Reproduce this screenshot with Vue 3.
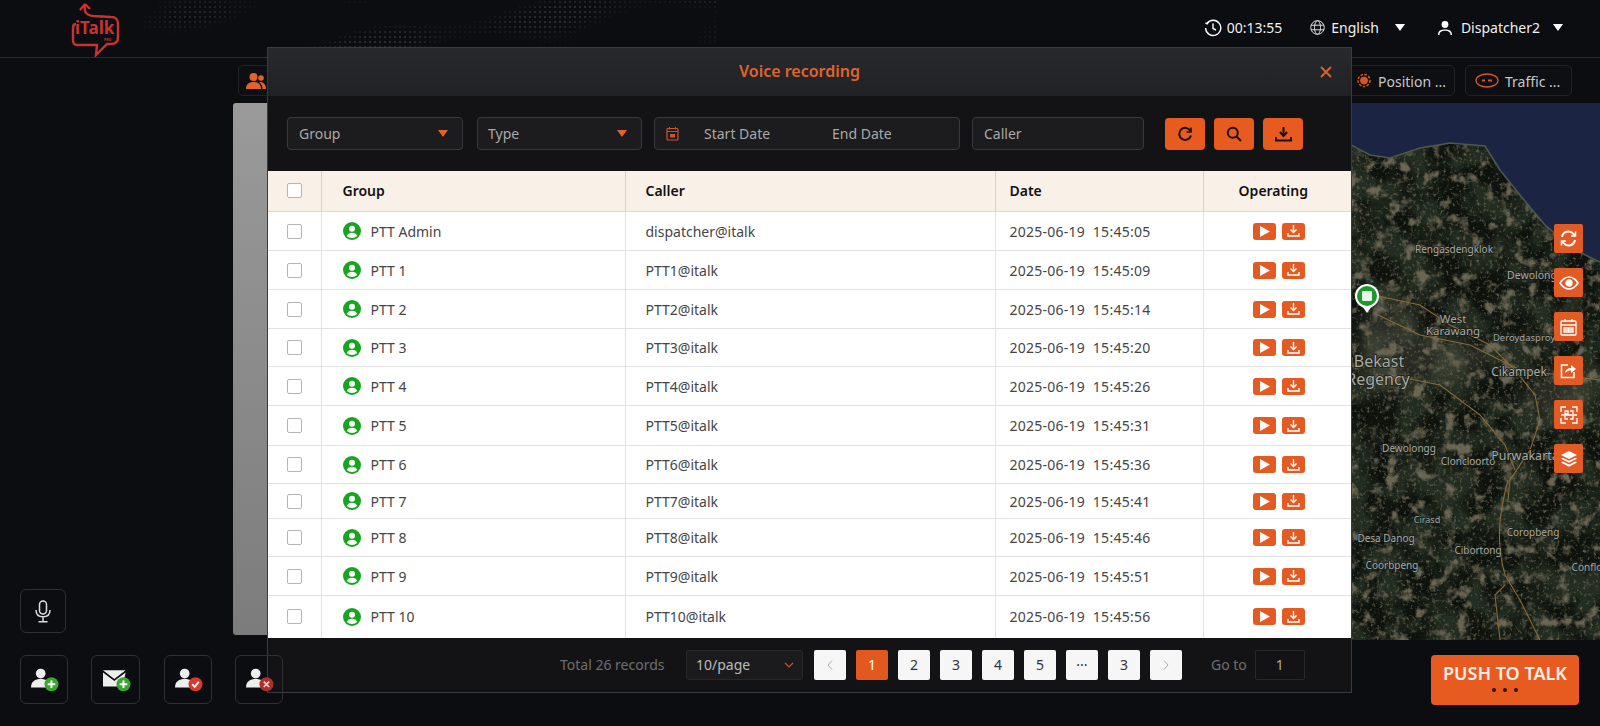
<script setup>
const rows = [
  { group: 'PTT Admin', caller: 'dispatcher@italk', time: '15:45:05', h: 39 },
  { group: 'PTT 1', caller: 'PTT1@italk', time: '15:45:09', h: 39 },
  { group: 'PTT 2', caller: 'PTT2@italk', time: '15:45:14', h: 39 },
  { group: 'PTT 3', caller: 'PTT3@italk', time: '15:45:20', h: 38 },
  { group: 'PTT 4', caller: 'PTT4@italk', time: '15:45:26', h: 39 },
  { group: 'PTT 5', caller: 'PTT5@italk', time: '15:45:31', h: 40 },
  { group: 'PTT 6', caller: 'PTT6@italk', time: '15:45:36', h: 38 },
  { group: 'PTT 7', caller: 'PTT7@italk', time: '15:45:41', h: 35 },
  { group: 'PTT 8', caller: 'PTT8@italk', time: '15:45:46', h: 38 },
  { group: 'PTT 9', caller: 'PTT9@italk', time: '15:45:51', h: 39 },
  { group: 'PTT 10', caller: 'PTT10@italk', time: '15:45:56', h: 42 },
]

const pages = ['1', '2', '3', '4', '5', '···', '3']

const mapLabels = [
  { t: 'Rengasdengklok', x: 1454, y: 253, s: 10 },
  { t: 'Dewolong', x: 1532, y: 279, s: 10.5 },
  { t: 'West', x: 1453, y: 323, s: 11.5 },
  { t: 'Karawang', x: 1453, y: 335, s: 11.5 },
  { t: 'Deroydasproy', x: 1524, y: 341, s: 9.5 },
  { t: 'Bekast', x: 1379, y: 367, s: 16 },
  { t: 'Regency', x: 1378, y: 385, s: 16 },
  { t: 'Cikampek', x: 1519, y: 376, s: 12 },
  { t: 'Dewolongg', x: 1409, y: 452, s: 10 },
  { t: 'Cloncloorto', x: 1468, y: 465, s: 10 },
  { t: 'Purwakarta', x: 1525, y: 460, s: 12.5 },
  { t: 'Cirasd', x: 1427, y: 523, s: 9 },
  { t: 'Desa Danog', x: 1386, y: 542, s: 10 },
  { t: 'Cibortong', x: 1478, y: 554, s: 10 },
  { t: 'Coorbpeng', x: 1392, y: 569, s: 10 },
  { t: 'Coropbeng', x: 1533, y: 536, s: 10 },
  { t: 'Conflon', x: 1590, y: 571, s: 10 },
]

// dotted world-map texture behind the top bar
const dots = []
for (let x = 130; x < 720; x += 5) {
  for (let y = 2; y < 56; y += 5) {
    const v = Math.sin(x * 0.035 + 1) + Math.cos(y * 0.12 + x * 0.02) + Math.sin(x * 0.011 + y * 0.07)
    if (v > 0.3) dots.push({ x, y, o: Math.min(0.34, (v - 0.1) * 0.18) })
  }
}
</script>

<template>
  <div class="app">
    <header class="topbar">
      <svg class="dots" width="720" height="57">
        <circle v-for="(d, i) in dots" :key="i" :cx="d.x" :cy="d.y" r="0.9" fill="#8b8d92" :opacity="d.o" />
      </svg>
      <svg class="logo" width="52" height="56" viewBox="0 0 52 56">
        <path d="M14 3 L9 9 M14 3 L19 8 M14 3 C13 10 14 14 22 15 L40 16 C45 16 47 18 47 24 L47 36 C47 41 45 43 40 43 L36 43 L25 54 L26 44 L6 44 C3 44 2 42 2 39 L2 27 C2 24 3 23 5 23" fill="none" stroke="#c9332f" stroke-width="2.4" />
        <text x="4" y="33" class="logo-text">iTalk</text>
        <text x="33" y="40" class="logo-pro">PRO</text>
      </svg>
      <div class="status">
        <span class="status-item">
          <svg width="18" height="18" viewBox="0 0 18 18" fill="none" stroke="#fff" stroke-width="1.4"><path d="M3 4.5A7.6 7.6 0 1 1 1.6 9" /><path d="M9 4.5V9.5L12 11" /><path d="M1.5 4L3.2 4.8 4 3" /></svg>
          00:13:55
        </span>
        <span class="status-item lang">
          <svg width="15" height="15" viewBox="0 0 15 15" fill="none" stroke="#ddd" stroke-width="1"><circle cx="7.5" cy="7.5" r="6.8" /><ellipse cx="7.5" cy="7.5" rx="3" ry="6.8" /><path d="M1 5.2H14M1 9.8H14" /></svg>
          English
          <i class="caret"></i>
        </span>
        <span class="status-item user">
          <svg width="16" height="16" viewBox="0 0 16 16" fill="#fff"><circle cx="8" cy="4.5" r="3.4" /><path d="M1 15C1 10.5 4 9.4 8 9.4S15 10.5 15 15H13.6C13.4 11.8 11 10.8 8 10.8S2.600 11.800 2.400 15Z" /></svg>
          Dispatcher2
          <i class="caret"></i>
        </span>
      </div>
    </header>

    <div class="upper">
      <aside class="left">
        <button class="tool mic">
          <svg width="16" height="23" viewBox="0 0 16 23" fill="none" stroke="#ddd" stroke-width="1.500"><rect x="4.500" y="1" width="7" height="13" rx="3.500" /><path d="M1 10C1 14.500 4 16.800 8 16.800S15 14.500 15 10M8 17V21.500M3.500 21.800H12.500" /></svg>
        </button>
      </aside>

      <main class="stage">
        <div class="tabs">
          <div class="tab first">
            <svg width="20" height="16" viewBox="0 0 20 16" fill="#e0642a"><circle cx="7.500" cy="4" r="4" /><path d="M0 16C0 11 3 9 7.500 9S15 11 15 16Z" /><circle cx="15" cy="5" r="2.800" /><path d="M13 9C17 8.500 20 11 20 16H16.500C16.500 13 15 10.500 13 9Z" /></svg>
          </div>
          <div class="tab position">
            <svg width="14" height="15" viewBox="0 0 14 15" fill="none" stroke="#d9581f"><circle cx="7" cy="7.500" r="3.500" fill="#d9581f" /><circle cx="7" cy="7.500" r="6" stroke-dasharray="2.500 1.500" stroke-width="1.500" /></svg>
            <span>Position ...</span>
          </div>
          <div class="tab traffic">
            <svg width="24" height="15" viewBox="0 0 24 15" fill="none" stroke="#d9581f" stroke-width="1.300"><ellipse cx="12" cy="7.500" rx="11" ry="6.500" /><path d="M7 7.500H10M13 7.500H17" stroke-width="1.800" /></svg>
            <span>Traffic ...</span>
          </div>
        </div>

        <div class="panels">
          <div class="grey"></div>
          <div class="map">
            <svg width="249" height="537" viewBox="1351 103 249 537">
              <defs>
                <filter id="terrain" x="0" y="0" width="100%" height="100%" color-interpolation-filters="sRGB">
                  <feTurbulence type="fractalNoise" baseFrequency="0.03" numOctaves="5" seed="4" />
                  <feColorMatrix type="matrix" values="0 0 0 0 0.05  0 0 0 0 0.07  0 0 0 0 0.05  0 0 0 4 -1.500" />
                </filter>
                <filter id="patches" x="0" y="0" width="100%" height="100%" color-interpolation-filters="sRGB">
                  <feTurbulence type="fractalNoise" baseFrequency="0.07" numOctaves="5" seed="21" />
                  <feColorMatrix type="matrix" values="0 0 0 0 0.42  0 0 0 0 0.40  0 0 0 0 0.33  0 0 0 5 -2.800" />
                </filter>
                <filter id="speckle" x="0" y="0" width="100%" height="100%" color-interpolation-filters="sRGB">
                  <feTurbulence type="fractalNoise" baseFrequency="0.3" numOctaves="3" seed="9" />
                  <feColorMatrix type="matrix" values="0 0 0 0 0.40  0 0 0 0 0.38  0 0 0 0 0.30  0 0 0 3 -1.650" />
                </filter>
                <filter id="haze" x="-30%" y="-30%" width="160%" height="160%">
                  <feGaussianBlur stdDeviation="9" />
                </filter>
                <clipPath id="land">
                  <path d="M1351 145 L1370 155 L1390 158 L1420 148 L1450 143 L1485 146 L1500 170 L1520 195 L1545 225 L1575 250 L1600 262 V640 H1351Z" />
                </clipPath>
              </defs>
              <rect x="1351" y="103" width="249" height="537" fill="#1c2444" />
              <g clip-path="url(#land)">
                <rect x="1351" y="103" width="249" height="537" fill="#222c20" />
                <rect x="1351" y="103" width="249" height="537" filter="url(#terrain)" />
                <g fill="#6e6a5c" opacity="0.3" filter="url(#haze)">
                  <ellipse cx="1390" cy="345" rx="30" ry="50" />
                  <ellipse cx="1450" cy="360" rx="40" ry="20" />
                  <ellipse cx="1560" cy="395" rx="32" ry="28" />
                </g>
                <rect x="1351" y="103" width="249" height="537" filter="url(#patches)" />
                <rect x="1351" y="103" width="249" height="537" filter="url(#speckle)" />
              </g>
              <path d="M1351 145 L1370 155 L1390 158 L1420 148 L1450 143 L1485 146 L1500 170 L1520 195 L1545 225 L1575 250 L1600 262" fill="none" stroke="#4b5a4a" stroke-width="1.500" />
              <g fill="none" stroke="#8a6a3a" stroke-width="1.100">
                <path d="M1378 296 L1420 305 L1450 325 L1490 345 L1515 370 L1535 395 L1540 420 L1530 450 L1510 480 L1508 500" />
                <path d="M1378 315 L1420 335 L1470 345 L1520 370 L1600 380" />
                <path d="M1390 375 L1440 385 L1480 415 L1505 445 L1515 470" />
                <path d="M1508 480 C1500 510 1495 540 1505 575 L1520 600 L1540 640" />
                <path d="M1505 585 L1495 595 L1500 640" />
              </g>
              <text v-for="l in mapLabels" :key="l.t" :x="l.x" :y="l.y" :font-size="l.s" text-anchor="middle" class="map-label">{{ l.t }}</text>
              <circle cx="1367" cy="296" r="12" fill="#fff" />
              <path d="M1362 306 L1367 313 L1372 306Z" fill="#fff" />
              <circle cx="1367" cy="296" r="10" fill="#1a9a2a" />
              <rect x="1362" y="291" width="10" height="10" rx="1" fill="#e8f5e8" />
            </svg>
            <div class="map-tools">
              <button class="map-tool">
                <svg width="17" height="17" viewBox="0 0 17 17" fill="none" stroke="#fff" stroke-width="2"><path d="M2 7A6.500 6.500 0 0 1 13.500 4L15 5.500M15 10A6.500 6.500 0 0 1 3.500 13L2 11.500" /><path d="M15.500 1.500V6H11M1.500 15.500V11H6" stroke-width="1.500" /></svg>
              </button>
              <button class="map-tool">
                <svg width="20" height="14" viewBox="0 0 20 14" fill="none" stroke="#fff" stroke-width="1.700"><path d="M1 7C4 2.500 7 1 10 1S16 2.500 19 7C16 11.500 13 13 10 13S4 11.500 1 7Z" /><circle cx="10" cy="7" r="2.800" fill="#fff" /></svg>
              </button>
              <button class="map-tool">
                <svg width="17" height="18" viewBox="0 0 17 18" fill="none" stroke="#fff" stroke-width="1.300"><rect x="1" y="3" width="15" height="14" rx="1" /><path d="M1 7H16M5 1V4M12 1V4M4 10H13V14H4ZM8.500 10V14M4 12H13" /></svg>
              </button>
              <button class="map-tool">
                <svg width="17" height="17" viewBox="0 0 17 17" fill="none" stroke="#fff" stroke-width="1.500"><path d="M8 3H1.500V15.500H14V10" /><path d="M5 11C5.500 7.500 8 6 11 6V3L16 7 11 11V8.500C9 8.500 7 9 5 11Z" fill="#fff" stroke="none" /></svg>
              </button>
              <button class="map-tool">
                <svg width="18" height="18" viewBox="0 0 18 18" fill="none" stroke="#fff" stroke-width="1.300"><path d="M1 6V1H6M12 1H17V6M17 12V17H12M6 17H1V12" /><path d="M5 5H8V8H5ZM10 5H13V8M5 10V13H8M13 10V13H10M1 9H17" /></svg>
              </button>
              <button class="map-tool">
                <svg width="18" height="18" viewBox="0 0 18 18" fill="#fff"><path d="M9 1L17 5 9 9 1 5Z" /><path d="M2.800 7.700L9 10.800 15.200 7.700 17 8.800 9 12.800 1 8.800Z" /><path d="M2.800 11.500L9 14.600 15.200 11.500 17 12.600 9 16.800 1 12.600Z" /></svg>
              </button>
            </div>
          </div>
        </div>
      </main>
    </div>

    <footer class="bottom">
      <div class="actions">
        <button class="tool wide">
          <svg width="28" height="24" viewBox="0 0 26 22"><circle cx="9" cy="5" r="4.500" fill="#eee" /><path d="M0 18C0 12 4 10 9 10S18 12 18 18Z" fill="#eee" /><circle cx="19" cy="15" r="6.500" fill="#3aa72e" /><path d="M19 11.500V18.500M15.500 15H22.500" stroke="#fff" stroke-width="1.800" /></svg>
        </button>
        <button class="tool wide mail">
          <svg width="28" height="24" viewBox="0 0 26 22"><path d="M0 2H21L10.500 10Z" fill="#eee" /><path d="M0 4V17H14L14 12 20 9 21 4 10.500 12Z" fill="#eee" /><circle cx="19" cy="15" r="6.500" fill="#3aa72e" /><path d="M19 11.500V18.500M15.500 15H22.500" stroke="#fff" stroke-width="1.800" /></svg>
        </button>
        <button class="tool wide">
          <svg width="28" height="24" viewBox="0 0 26 22"><circle cx="9" cy="5" r="4.500" fill="#eee" /><path d="M0 18C0 12 4 10 9 10S18 12 18 18Z" fill="#eee" /><circle cx="19" cy="15" r="6.500" fill="#d63a2c" /><path d="M16 15L18.300 17.300 22 12.800" fill="none" stroke="#fff" stroke-width="1.800" /></svg>
        </button>
        <button class="tool wide">
          <svg width="28" height="24" viewBox="0 0 26 22"><circle cx="9" cy="5" r="4.500" fill="#eee" /><path d="M0 18C0 12 4 10 9 10S18 12 18 18Z" fill="#eee" /><circle cx="19" cy="15" r="6.500" fill="#a93329" /><path d="M16.500 12.500L21.500 17.500M21.500 12.500L16.500 17.500" stroke="#ecc" stroke-width="1.600" /></svg>
        </button>
      </div>
      <button class="ptt">
        <span>PUSH TO TALK</span>
        <span class="ptt-dots"><i></i><i></i><i></i></span>
      </button>
    </footer>

    <section class="modal">
      <div class="modal-head">
        <h2>Voice recording</h2>
        <svg class="close" width="12" height="12" viewBox="0 0 12 12" stroke="#e0642a" stroke-width="1.800"><path d="M1 1L11 11M11 1L1 11" /></svg>
      </div>

      <div class="filters">
        <div class="field group-field">Group<i class="arrow"></i></div>
        <div class="field type-field">Type<i class="arrow"></i></div>
        <div class="field date-field">
          <svg width="13" height="15" viewBox="0 0 13 15" fill="none" stroke="#c9562a" stroke-width="1.200"><rect x="1" y="2.500" width="11" height="11.500" rx="1" /><path d="M1 5.500H12M3.500 1V3.500M9.500 1V3.500" /><rect x="4" y="8" width="5" height="3.500" fill="#c9562a" stroke="none" /></svg>
          <span class="start">Start Date</span>
          <span>End Date</span>
        </div>
        <div class="field caller-field">Caller</div>
        <div class="filter-btns">
          <button class="icon-btn">
            <svg width="16" height="16" viewBox="0 0 16 16" fill="none" stroke="#1a1009" stroke-width="2"><path d="M13.500 5A6 6 0 1 0 14 9.500" /><path d="M14 1.500V6H9.500" stroke-width="1.600" /></svg>
          </button>
          <button class="icon-btn">
            <svg width="16" height="16" viewBox="0 0 16 16" fill="none" stroke="#1a1009" stroke-width="2"><circle cx="6.800" cy="6.800" r="5" /><path d="M10.500 10.500L15 15" /></svg>
          </button>
          <button class="icon-btn">
            <svg width="17" height="16" viewBox="0 0 17 16" fill="none" stroke="#1a1009" stroke-width="2"><path d="M8.500 1V9M5 6L8.500 10 12 6" /><path d="M1 11V14.500H16V11" /></svg>
          </button>
        </div>
      </div>

      <table class="records">
        <colgroup>
          <col style="width: 53px" />
          <col style="width: 304px" />
          <col style="width: 370px" />
          <col style="width: 208px" />
          <col style="width: 148px" />
        </colgroup>
        <thead>
          <tr>
            <th class="check"><i class="box"></i></th>
            <th class="pad-group">Group</th>
            <th class="pad-caller">Caller</th>
            <th>Date</th>
            <th class="center">Operating</th>
          </tr>
        </thead>
        <tbody>
          <tr v-for="row in rows" :key="row.group" :style="{ height: row.h + 'px' }">
            <td class="check"><i class="box"></i></td>
            <td class="pad-group">
              <span class="who">
                <svg width="18" height="18" viewBox="0 0 18 18"><circle cx="9" cy="9" r="9" fill="#17a51f" /><circle cx="9" cy="6.800" r="3" fill="#fff" /><path d="M3.800 14C4.500 11.500 6.500 10.800 9 10.800S13.500 11.500 14.200 14C12.800 15.300 11 16 9 16S5.200 15.300 3.800 14Z" fill="#fff" /></svg>
                {{ row.group }}
              </span>
            </td>
            <td class="pad-caller">{{ row.caller }}</td>
            <td class="date">{{ '2025-06-19  ' + row.time }}</td>
            <td class="center">
              <span class="ops">
                <button class="op">
                  <svg width="11" height="11" viewBox="0 0 11 11" fill="#fff"><path d="M1 0L11 5.500 1 11Z" /></svg>
                </button>
                <button class="op">
                  <svg width="13" height="12" viewBox="0 0 13 12" fill="none" stroke="#fff" stroke-width="1.400"><path d="M6.500 0V7M3.500 4.500L6.500 7.500 9.500 4.500" /><path d="M1 8V11H12V8" /></svg>
                </button>
              </span>
            </td>
          </tr>
        </tbody>
      </table>

      <div class="pager">
        <span class="total">Total 26 records</span>
        <div class="size">
          10/page
          <svg width="10" height="6" viewBox="0 0 10 6" fill="none" stroke="#c9562a" stroke-width="1.200"><path d="M1 1L5 5 9 1" /></svg>
        </div>
        <div class="page-list">
          <button class="page nav">
            <svg width="6" height="10" viewBox="0 0 6 10" fill="none" stroke="#aaa"><path d="M5 0.500L1 5 5 9.500" /></svg>
          </button>
          <button v-for="(p, i) in pages" :key="i" class="page" :class="{ active: i === 0 }">{{ p }}</button>
          <button class="page nav">
            <svg width="6" height="10" viewBox="0 0 6 10" fill="none" stroke="#aaa"><path d="M1 0.500L5 5 1 9.500" /></svg>
          </button>
        </div>
        <span class="goto">Go to</span>
        <div class="goto-input">1</div>
      </div>
    </section>
  </div>
</template>

<style scoped>
.app {
  position: relative;
  display: flex;
  flex-direction: column;
  width: 1600px;
  height: 726px;
  overflow: hidden;
  background: #0b0d11;
  color: #fff;
  font-family: "Noto Sans", "Open Sans", sans-serif;
  font-size: 14px;
}

button {
  padding: 0;
  border: 0;
  font: inherit;
}

.topbar {
  position: relative;
  display: flex;
  align-items: flex-start;
  flex: none;
  height: 58px;
  box-sizing: border-box;
  border-bottom: 1px solid #2b2d31;
}

.dots {
  position: absolute;
  left: 0;
  top: 0;
}

.logo {
  position: relative;
  margin-left: 71px;
  margin-top: 1px;
}

.logo-text {
  fill: #c9332f;
  font-size: 17px;
  font-weight: 700;
  font-family: "Noto Sans", sans-serif;
}

.logo-pro {
  fill: #c9332f;
  font-size: 3.5px;
  font-weight: 700;
}

.status {
  position: relative;
  display: flex;
  align-items: center;
  margin-left: auto;
  padding: 18px 37px 0 0;
  color: #f0f0f0;
}

.status-item {
  display: flex;
  align-items: center;
  gap: 5px;
}

.lang {
  margin-left: 28px;
  gap: 6px;
}

.user {
  margin-left: 32px;
  gap: 8px;
}

.caret {
  width: 0;
  height: 0;
  margin-left: 5px;
  border-left: 5.5px solid transparent;
  border-right: 5.5px solid transparent;
  border-top: 7px solid #fff;
}

.lang .caret {
  margin-left: 10px;
}

.upper {
  display: flex;
  flex: none;
  height: 582px;
}

.left {
  display: flex;
  align-items: flex-end;
  flex: none;
  width: 233px;
  box-sizing: border-box;
  padding: 0 0 7px 20px;
}

.tool {
  display: flex;
  align-items: center;
  justify-content: center;
  box-sizing: border-box;
  border: 1px solid #2e3034;
  border-radius: 6px;
  background: transparent;
}

.mic {
  width: 46px;
  height: 44px;
}

.stage {
  display: flex;
  flex-direction: column;
  flex: 1;
  min-width: 0;
}

.tabs {
  display: flex;
  align-items: center;
  gap: 10px;
  height: 31px;
  margin-top: 7px;
  padding-right: 28px;
  color: #c8c8c8;
}

.tab {
  display: flex;
  align-items: center;
  box-sizing: border-box;
  height: 31px;
  gap: 7px;
  border: 1px solid #202227;
  border-radius: 5px;
  background: #0d0f13;
}

.tab span {
  padding-top: 2px;
}

.first {
  width: 110px;
  margin-left: 5px;
  margin-right: auto;
  padding-left: 7px;
}

.position {
  width: 120px;
  justify-content: flex-end;
  padding-right: 8px;
}

.traffic {
  width: 107px;
  padding-left: 9px;
  gap: 6px;
}

.panels {
  display: flex;
  flex: 1;
  margin-top: 7px;
  height: 537px;
}

.grey {
  width: 1118px;
  height: 532px;
  border-radius: 3px;
  background: linear-gradient(180deg, #9a9a9a, #7c7c7c);
}

.map {
  position: relative;
  width: 249px;
  height: 537px;
}

.map svg {
  display: block;
}

.map-label {
  fill: #a8aaa4;
  font-family: "Noto Sans", sans-serif;
  paint-order: stroke;
  stroke: #1a1d18;
  stroke-width: 1.5px;
}

.map-tools {
  position: absolute;
  top: 121px;
  right: 17px;
  display: flex;
  flex-direction: column;
  gap: 15px;
}

.map-tool {
  display: flex;
  align-items: center;
  justify-content: center;
  width: 29px;
  height: 29px;
  border-radius: 2px;
  background: #e25a24;
}

.bottom {
  position: relative;
  z-index: 3;
  display: flex;
  align-items: flex-start;
  justify-content: space-between;
  flex: 1;
  padding: 15px 21px 0 20px;
}

.actions {
  display: flex;
  gap: 23px;
}

.wide {
  width: 48px;
  height: 49px;
}

.wide svg {
  margin-left: 2px;
}

.mail {
  width: 49px;
  margin-right: 1px;
}

.ptt {
  display: flex;
  flex-direction: column;
  align-items: center;
  width: 148px;
  height: 50px;
  padding-top: 6px;
  box-sizing: border-box;
  border-radius: 4px;
  background: #e85b20;
  color: #fbeee6;
  font-size: 18px;
  font-weight: 600;
  line-height: 24px;
}

.ptt-dots {
  display: flex;
  gap: 7px;
  margin-top: 3px;
}

.ptt-dots i {
  width: 4px;
  height: 4px;
  border-radius: 50%;
  background: #30140a;
}

.modal {
  position: absolute;
  z-index: 2;
  left: 267px;
  top: 47px;
  display: flex;
  flex-direction: column;
  box-sizing: border-box;
  width: 1085px;
  height: 646px;
  border: 1px solid #3a3b3f;
  background: #131315;
}

.modal-head {
  position: relative;
  display: flex;
  align-items: center;
  justify-content: center;
  flex: none;
  height: 48px;
  padding: 0 20px 2px 0;
  box-sizing: border-box;
  background: linear-gradient(180deg, #28292d, #212226);
}

.modal-head h2 {
  margin: 0;
  color: #e0642a;
  font-size: 16px;
  font-weight: 600;
}

.close {
  position: absolute;
  right: 19px;
  top: 18px;
}

.filters {
  display: flex;
  align-items: center;
  flex: none;
  height: 75px;
  padding-left: 19px;
  box-sizing: border-box;
  color: #a9a9a9;
}

.field {
  display: flex;
  align-items: center;
  box-sizing: border-box;
  height: 33px;
  padding: 0 11px;
  border: 1px solid #38393c;
  border-radius: 4px;
  background: #1c1c1e;
}

.group-field {
  justify-content: space-between;
  width: 176px;
  margin-right: 14px;
}

.type-field {
  justify-content: space-between;
  width: 165px;
  margin-right: 12px;
  padding-left: 10px;
}

.date-field {
  width: 306px;
  margin-right: 12px;
}

.date-field .start {
  width: 128px;
  margin-left: 25px;
}

.caller-field {
  width: 172px;
}

.arrow {
  width: 0;
  height: 0;
  margin-right: 3px;
  border-left: 5.5px solid transparent;
  border-right: 5.5px solid transparent;
  border-top: 7px solid #e0642a;
}

.filter-btns {
  display: flex;
  gap: 9px;
  margin-left: 21px;
}

.icon-btn {
  display: flex;
  align-items: center;
  justify-content: center;
  width: 40px;
  height: 32px;
  border-radius: 4px;
  background: #e85b20;
}

.records {
  width: 1083px;
  flex: none;
  table-layout: fixed;
  border-collapse: collapse;
  background: #fff;
  color: #454545;
}

.records th {
  height: 38px;
  padding: 0 0 2px 14px;
  border-right: 1px solid #d8d0c8;
  border-bottom: 1px solid #dcd9d5;
  background: #f9f0e8;
  color: #111;
  font-weight: 600;
  text-align: left;
}

.records td {
  padding: 0 0 0 14px;
  border-right: 1px solid #e2e2e2;
  border-bottom: 1px solid #e2e2e2;
}

.records th:last-child,
.records td:last-child {
  border-right: 0;
}

.records tbody tr:last-child td {
  border-bottom: 0;
}

.records .check {
  padding-left: 19px;
}

.records .pad-group {
  padding-left: 21px;
}

.records .pad-caller {
  padding-left: 20px;
}

.records th.center {
  padding: 0 8px 2px 0;
  text-align: center;
}

.records td.center {
  padding-left: 0;
}

.box {
  display: block;
  width: 15px;
  height: 15px;
  box-sizing: border-box;
  border: 1px solid #b5b5b5;
  border-radius: 2px;
  background: #fff;
}

.who {
  display: flex;
  align-items: center;
  gap: 10px;
}

.date {
  white-space: pre;
  letter-spacing: 0.25px;
}

.ops {
  display: flex;
  justify-content: center;
  gap: 6px;
  padding-left: 4px;
}

.op {
  display: flex;
  align-items: center;
  justify-content: center;
  width: 23px;
  height: 17px;
  border-radius: 3px;
  background: #e35a22;
}

.pager {
  display: flex;
  align-items: center;
  flex: 1;
  padding-left: 292px;
  color: #6f6f6f;
}

.total {
  width: 126px;
}

.size {
  display: flex;
  align-items: center;
  justify-content: space-between;
  box-sizing: border-box;
  width: 117px;
  height: 30px;
  padding: 0 8px 0 9px;
  border: 1px solid #28282a;
  border-radius: 3px;
  background: #1b1b1d;
  color: #bbb;
}

.page-list {
  display: flex;
  gap: 10px;
  margin-left: 11px;
}

.page {
  width: 32px;
  height: 30px;
  display: flex;
  align-items: center;
  justify-content: center;
  border-radius: 2px;
  background: #f6f6f6;
  color: #333;
}

.page.active {
  background: #e2591f;
  color: #fff;
}

.goto {
  margin-left: 29px;
}

.goto-input {
  display: flex;
  align-items: center;
  justify-content: center;
  box-sizing: border-box;
  width: 50px;
  height: 30px;
  margin-left: 8px;
  border: 1px solid #28282a;
  border-radius: 2px;
  color: #aaa;
}
</style>
